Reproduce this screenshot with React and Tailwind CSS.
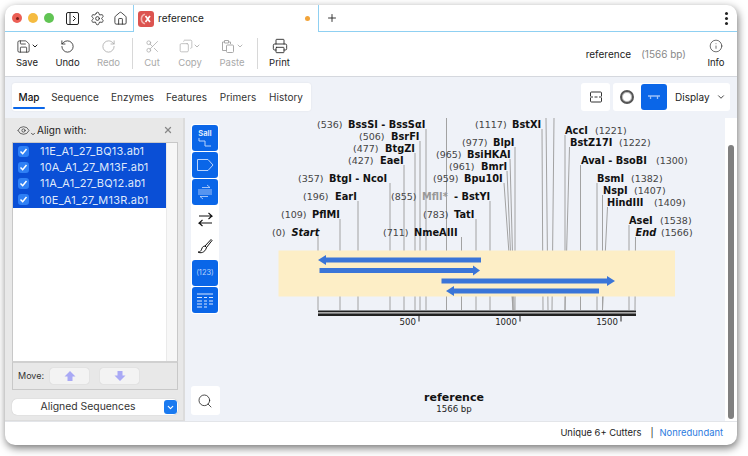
import { ChevronDown, Copy, Home, Info, Printer, RotateCcw, RotateCw, Save, Scissors, Search, Settings, X, Eye, Plus } from 'lucide-react';

const TOOLS = [
  { label: 'Undo', w: 'w-[41px]', Icon: RotateCcw },
  { label: 'Redo', w: 'w-[41px]', Icon: RotateCw, off: true },
];

const TABS = ['Map', 'Sequence', 'Enzymes', 'Features', 'Primers', 'History'];
const TAB_WIDTHS = ['w-[32px]', 'w-[60px]', 'w-[55px]', 'w-[53px]', 'w-[50px]', 'w-[46px]'];
const FILES = ['11E_A1_27_BQ13.ab1', '10A_A1_27_M13F.ab1', '11A_A1_27_BQ12.ab1', '10E_A1_27_M13R.ab1'];

// enzyme labels: [pos x, pos, name x, name, baseline y]
const LABELS = [
  [317, '(536)', 348, 'BssSI - BssSαI', 128],
  [359, '(506)', 391, 'BsrFI', 140],
  [353, '(477)', 385, 'BtgZI', 152],
  [348, '(427)', 380, 'EaeI', 164],
  [298, '(357)', 329, 'BtgI - NcoI', 182],
  [303, '(196)', 335, 'EarI', 200],
  [281, '(109)', 312, 'PflMI', 218],
  [383, '(711)', 414, 'NmeAIII', 236],
  [423, '(783)', 454, 'TatI', 218],
  [433, '(959)', 464, 'Bpu10I', 182],
  [449, '(961)', 481, 'BmrI', 170],
  [436, '(965)', 467, 'BsiHKAI', 158],
  [462, '(977)', 493, 'BlpI', 146],
  [475, '(1117)', 512, 'BstXI', 128],
  [595, '(1221)', 565, 'AccI', 134],
  [619, '(1222)', 570, 'BstZ17I', 146],
  [656, '(1300)', 581, 'AvaI - BsoBI', 164],
  [631, '(1382)', 597, 'BsmI', 182],
  [634, '(1407)', 603, 'NspI', 194],
  [654, '(1409)', 607, 'HindIII', 206],
  [660, '(1538)', 629, 'AseI', 224],
];

// cut lines: [top x, top y, bottom x]
const LINES = [
  [318, 236, 318], [340, 219, 340], [358, 201, 358], [390, 183, 390], [404, 165, 404],
  [415, 153, 415], [420, 141, 420], [426, 129, 426], [446.5, 118, 446.5], [461.5, 237, 461.5],
  [476, 219, 476], [490, 201, 490], [504, 183, 513], [507, 171, 513], [510, 159, 514],
  [515, 147, 515], [542, 129, 543], [546, 118, 548], [554, 118, 552], [565, 135, 565],
  [569.5, 147, 565], [580.5, 165, 580.5], [597, 183, 597], [602.5, 195, 602.5], [607.5, 207, 602.5],
  [629, 225, 629], [635.5, 237, 635],
];

function ToolButton({ label, w, off, children }) {
  return (
    <div className={`${w} flex flex-col items-center ${off ? 'text-[#a9a9a9]' : 'text-[#222]'}`}>
      <div className="h-[20px] flex items-center justify-center">{children}</div>
      <span className="text-[9.5px] leading-[14px]">{label}</span>
    </div>
  );
}

function Logo() {
  return (
    <div className="w-4 h-4 rounded-[3px] bg-[#dc5450] flex items-center justify-center">
      <svg viewBox="0 0 16 16" width="16" height="16">
        <path d="M7 3.2 A5 5 0 0 0 7 12.8" fill="none" stroke="#f3b5b0" strokeWidth="1.6" />
        <path d="M7.5 5 L12 11 M12 5 L7.5 11" stroke="white" strokeWidth="1.7" />
      </svg>
    </div>
  );
}

function BlueBtn({ children }) {
  return <div className="w-[26px] h-[26px] rounded-[3px] bg-[#0a66e8] flex items-center justify-center text-[#b9d3fb]">{children}</div>;
}

function PasteIcon() {
  return (
    <svg width="15" height="15" viewBox="0 0 15 15" fill="none" stroke="currentColor" strokeWidth="1">
      <path d="M3 3 H1.5 V11.5 H5 M8 3 H9.5 V5 M3.5 1.5 H7.5 V4 H3.5 Z" />
      <rect x="5.5" y="6" width="7" height="7.5" rx="1" />
    </svg>
  );
}

function BlockArrow({ down }) {
  return (
    <svg width="12" height="12" viewBox="0 0 12 12" fill="#a9a9f5" className={down ? 'rotate-180' : ''}>
      <path d="M6 1 L11.5 6.5 L8.5 6.5 L8.5 11 L3.5 11 L3.5 6.5 L0.5 6.5 Z" />
    </svg>
  );
}

function MapCanvas() {
  return (
    <svg viewBox="225 118 500 303" width="500" height="303" style={{ fontFamily: '"DejaVu Sans", sans-serif' }} className="block">
      {LINES.map(([x1, y1, x2], i) => (
        <line key={i} x1={x1} y1={y1} x2={x2} y2={310} stroke="#a2a2a2" strokeWidth="1" />
      ))}
      {LABELS.map(([px, pos, nx, name, y]) => (
        <g key={name}>
          <text x={px} y={y} fontSize="9.5" fill="#444">{pos}</text>
          <text x={nx} y={y} fontSize="9.8" fontWeight="700" fill="#111">{name}</text>
        </g>
      ))}
      <text x="272" y="236" fontSize="9.5" fill="#444">(0)</text>
      <text x="291.5" y="236" fontSize="9.8" fontWeight="700" fontStyle="italic" fill="#111">Start</text>
      <text x="635.5" y="236" fontSize="9.8" fontWeight="700" fontStyle="italic" fill="#111">End</text>
      <text x="661" y="236" fontSize="9.5" fill="#444">(1566)</text>
      <text x="391" y="200" fontSize="9.5" fill="#444">(855)</text>
      <text x="422" y="200" fontSize="9.8" fontWeight="700" fill="#999">MflI*</text>
      <text x="454" y="200" fontSize="9.8" fontWeight="700" fill="#111">- BstYI</text>

      <rect x="278.5" y="250.5" width="396.5" height="46" fill="#fdeec6" />
      <g fill="#3a75d8">
        <path d="M318 260 L326 255 L326 257.5 L481 257.5 L481 262.5 L326 262.5 L326 265 Z" />
        <path d="M480 270.5 L473 265.5 L473 268 L319.5 268 L319.5 273 L473 273 L473 275.5 Z" />
        <path d="M615 281 L607 276 L607 278.5 L441.5 278.5 L441.5 283.5 L607 283.5 L607 286 Z" />
        <path d="M446 291 L454 286 L454 288.5 L599 288.5 L599 293.5 L454 293.5 L454 296 Z" />
      </g>

      <rect x="318" y="310.5" width="318" height="1.5" fill="#222" />
      <rect x="318" y="312" width="318" height="1.5" fill="#aaa" />
      <rect x="318" y="313.5" width="318" height="2.5" fill="#222" />
      {[[419, '500'], [520, '1000'], [621, '1500']].map(([x, t]) => (
        <g key={t}>
          <line x1={x} y1="316" x2={x} y2="321.5" stroke="#222" />
          <text x={x - 3} y="324.5" fontSize="8.6" textAnchor="end" fill="#222">{t}</text>
        </g>
      ))}
      <text x="454" y="400.5" fontSize="11" fontWeight="700" textAnchor="middle" fill="#111">reference</text>
      <text x="454" y="412" fontSize="8.6" textAnchor="middle" fill="#222">1566 bp</text>
    </svg>
  );
}

export default function App() {
  return (
    <div className="w-[748px] h-[456px] bg-white pt-[5px] pl-[5px] overflow-hidden" style={{ fontFamily: 'Inter, sans-serif' }}>
      <div className="w-[732px] h-[440px] rounded-[10px] overflow-hidden bg-white flex flex-col shadow-[1px_3px_8px_rgba(0,0,0,0.55)]">
        {/* tab bar */}
        <div className="h-[27px] flex shrink-0">
          <div className="w-[129px] border-b border-r border-[#8fd0f2] flex items-center pl-[7px]">
            <span className="w-[10px] h-[10px] rounded-full bg-[#ec5f55] flex items-center justify-center"><span className="w-[3px] h-[3px] rounded-full bg-[#7c1f1a]" /></span>
            <span className="ml-[6px] w-[10px] h-[10px] rounded-full bg-[#f5bb40]" />
            <span className="ml-[6px] w-[10px] h-[10px] rounded-full bg-[#61c454]" />
            <svg className="ml-[12px]" width="13" height="13" viewBox="0 0 13 13" fill="none" stroke="#222" strokeWidth="1">
              <rect x="0.5" y="0.5" width="12" height="12" rx="1.5" />
              <path d="M4 0.5 V12.5 M7 4 L9.5 6.5 L7 9" />
            </svg>
            <Settings className="ml-[11px]" size={15} strokeWidth={1.3} color="#222" />
            <Home className="ml-[8px]" size={15} strokeWidth={1.3} color="#222" />
          </div>
          <div className="w-[184px] flex items-center pl-[4px] pr-[8px]">
            <Logo />
            <span className="ml-[4px] text-[10px] text-[#222] tracking-[0.05px]">reference</span>
            <span className="ml-auto w-[5px] h-[5px] rounded-full bg-[#f2a43a]" />
          </div>
          <div className="flex-1 border-l border-b border-[#8fd0f2] flex items-center pl-[7px] pr-[9px]">
            <Plus size={12} strokeWidth={1.8} color="#222" />
            <div className="ml-auto flex flex-col gap-[2px]">
              <span className="w-[3px] h-[3px] rounded-full bg-[#222]" />
              <span className="w-[3px] h-[3px] rounded-full bg-[#222]" />
              <span className="w-[3px] h-[3px] rounded-full bg-[#222]" />
            </div>
          </div>
        </div>

        {/* toolbar */}
        <div className="h-[45px] shrink-0 border-b border-[#d5d8de] flex items-start pt-[4px] pl-[2px]">
          <ToolButton label="Save" w="w-[40px]">
            <Save size={15} strokeWidth={1.2} />
            <ChevronDown size={8} strokeWidth={3} />
          </ToolButton>
          {TOOLS.map(({ label, w, Icon, off }) => (
            <ToolButton key={label} label={label} w={w} off={off}>
              <Icon size={15} strokeWidth={1.3} />
            </ToolButton>
          ))}
          <div className="w-px h-[31px] bg-[#d8d8d8] ml-[3px] mt-[2px]" />
          <ToolButton label="Cut" w="w-[38px]" off><Scissors size={15} strokeWidth={1.2} /></ToolButton>
          <ToolButton label="Copy" w="w-[38px]" off>
            <Copy size={14} strokeWidth={1.2} className="-scale-x-100" />
            <ChevronDown size={8} strokeWidth={2.5} />
          </ToolButton>
          <ToolButton label="Paste" w="w-[46px]" off>
            <PasteIcon />
            <ChevronDown size={8} strokeWidth={2.5} />
          </ToolButton>
          <div className="w-px h-[31px] bg-[#d8d8d8] ml-[2px] mt-[2px]" />
          <ToolButton label="Print" w="w-[43px]"><Printer size={16} strokeWidth={1.3} /></ToolButton>
          <div className="ml-auto self-center flex items-center pb-[3px] text-[10px]">
            <span className="text-[#222]">reference</span>
            <span className="ml-[10px] text-[#888]">(1566 bp)</span>
          </div>
          <div className="ml-[9px]">
            <ToolButton label="Info" w="w-[42px]"><Info size={14} strokeWidth={1.1} /></ToolButton>
          </div>
        </div>

        <div className="flex-1 min-h-0 bg-[#eff2f8] flex flex-col">
          {/* view tabs */}
          <div className="h-[41px] shrink-0 flex items-start pt-[6px] pl-[7px] pr-[7px]">
            <div className="h-[28px] w-[299px] bg-white rounded-[3px] flex items-center pl-[1px] text-[10px] text-[#333] shadow-[0_0_2px_rgba(0,0,0,0.08)]">
              {TABS.map((t, i) => (
                <div key={t} className={`h-full flex items-center justify-center relative ${TAB_WIDTHS[i]} ${i === 0 ? 'font-medium text-[#111]' : ''}`}>
                  {t}
                  {i === 0 && <span className="absolute left-0 right-0 bottom-[2px] h-[2px] bg-[#0a66e8] rounded-full" />}
                </div>
              ))}
            </div>
            <div className="ml-auto w-[29px] h-[28px] bg-white rounded-[3px] flex items-center justify-center">
              <svg width="12" height="12" viewBox="0 0 12 12" fill="none" stroke="#333" strokeWidth="1">
                <path d="M0.5 5 V2 Q0.5 1 1.5 1 H10.5 Q11.5 1 11.5 2 V5 M0.5 7 V10 Q0.5 11 1.5 11 H10.5 Q11.5 11 11.5 10 V7 M0 6 H3 M9 6 H12 M4.5 6 H7.5" />
              </svg>
            </div>
            <div className="ml-[3px] w-[117px] h-[28px] bg-white rounded-[3px] flex items-center pl-[7px] text-[10px] text-[#222]">
              <span className="w-[14px] h-[14px] rounded-full border-[2px] border-[#555] shadow-[inset_0_0_0_1px_#bbb]" />
              <div className="ml-[7px] w-[26px] h-[26px] bg-[#0a66e8] rounded-[3px] flex items-center justify-center">
                <svg width="12" height="5" viewBox="0 0 12 5" fill="none" stroke="#9cc0f8" strokeWidth="1.3">
                  <path d="M0 1 H12 M2.5 1 V4 M9.5 1 V4" />
                </svg>
              </div>
              <span className="ml-[8px]">Display</span>
              <ChevronDown className="ml-[6px]" size={10} strokeWidth={2} />
            </div>
          </div>

          <div className="flex-1 min-h-0 flex">
            {/* alignment panel */}
            <div className="w-[180px] shrink-0 bg-[#e8e8e8] border-r-2 border-[#dcdcdc] border-b flex flex-col px-[7px]">
              <div className="h-[24px] shrink-0 flex items-center text-[10px] text-[#222]">
                <Eye className="ml-[5px]" size={13} strokeWidth={1.2} />
                <ChevronDown size={6} strokeWidth={3} className="mt-[8px]" />
                <span className="ml-[1px]">Align with:</span>
                <X className="ml-auto mr-[3px]" size={10} strokeWidth={3} color="#888" />
              </div>
              <div className="h-[220px] w-[166px] shrink-0 border border-[#c8c8c8] flex flex-col">
                <div className="flex-1 min-h-0 flex bg-white">
                  <div className="w-[153px]">
                    {FILES.map((f) => (
                      <div key={f} className="h-[16.25px] bg-[#0a4fd6] flex items-center pl-[5px] text-[11px] text-[#dfe8fb] tracking-[0.2px]">
                        <span className="w-[11px] h-[11px] rounded-[3px] bg-[#2f80f5] flex items-center justify-center">
                          <svg width="9" height="9" viewBox="0 0 9 9" fill="none" stroke="white" strokeWidth="1.5"><path d="M1.5 4.5 L3.7 6.7 L7.5 2" /></svg>
                        </span>
                        <span className="ml-[11px]">{f}</span>
                      </div>
                    ))}
                  </div>
                  <div className="flex-1 bg-[#f7f7f7] border-l border-[#eaeaea]" />
                </div>
              </div>
              <div className="h-[29px] w-[166px] shrink-0 border border-t-[2px] border-[#c8c8c8] border-t-[#d0d0d0] flex items-center pl-[5px] text-[9px] text-[#333] -mt-px">
                <span>Move:</span>
                <div className="ml-[6px] w-[39px] h-[16px] rounded-[3px] bg-[#f3f3f3] flex items-center justify-center shadow-[0_0_1px_rgba(0,0,0,0.2)]">
                  <BlockArrow />
                </div>
                <div className="ml-[11px] w-[39px] h-[16px] rounded-[3px] bg-[#f3f3f3] flex items-center justify-center shadow-[0_0_1px_rgba(0,0,0,0.2)]">
                  <BlockArrow down />
                </div>
              </div>
              <div className="mt-[9px] h-[16px] w-[166px] shrink-0 bg-white rounded-[5px] flex items-center relative shadow-[0_0_1px_rgba(0,0,0,0.25)]">
                <span className="w-[152px] text-center text-[10.4px] text-[#333]">Aligned Sequences</span>
                <span className="absolute right-[1px] top-[1px] w-[13px] h-[14px] rounded-[3px] bg-[#1a7af0] flex items-center justify-center">
                  <ChevronDown size={9} strokeWidth={3} color="white" />
                </span>
              </div>
            </div>

            {/* side tools */}
            <div className="w-[40px] shrink-0 flex flex-col items-center pt-[6px] pb-[6px]">
              <div className="w-[28px] bg-white rounded-[3px] flex flex-col items-center py-px gap-px">
                <BlueBtn>
                  <div className="flex flex-col items-center">
                    <span className="text-[7.5px] font-bold leading-[8px] text-[#dce8fd]">SalI</span>
                    <svg width="14" height="9" viewBox="0 0 14 9" fill="none" stroke="#b9d3fb" strokeWidth="1"><path d="M1 0 V3 H7 V8 H13" /></svg>
                  </div>
                </BlueBtn>
                <BlueBtn>
                  <svg width="17" height="12" viewBox="0 0 17 12" fill="none" stroke="#b9d3fb" strokeWidth="1"><path d="M0.5 0.5 H11 L16 6 L11 11.5 H0.5 Z" /></svg>
                </BlueBtn>
                <BlueBtn>
                  <svg width="16" height="16" viewBox="0 0 16 16" fill="none" stroke="#c6dbfc" strokeWidth="0.8"><path d="M5 3.5 H13 L10 1 M1 6 H15 M1 8 H15 M1 10 H15 M11 12.5 H3 L6 15" /></svg>
                </BlueBtn>
                <div className="w-[26px] h-[26px] flex items-center justify-center">
                  <svg width="15" height="15" viewBox="0 0 15 15" fill="none" stroke="#111" strokeWidth="1.1"><path d="M1 4 H14 L10.5 1 M14 4 L10.5 7 M14 11 H1 L4.5 8 M1 11 L4.5 14" /></svg>
                </div>
                <div className="w-[26px] h-[26px] flex items-center justify-center">
                  <svg width="16" height="16" viewBox="0 0 16 16" fill="none" stroke="#111" strokeWidth="1"><path d="M8 8 L14 1.5 L15 2.5 L9.5 9.5 Z M8 8 C5 8 5 11 4 12.5 C3 14 2 14 1 14 C3 15.5 8 15 9.5 9.5 Z" /></svg>
                </div>
                <BlueBtn><span className="text-[7.5px]">(123)</span></BlueBtn>
                <BlueBtn>
                  <svg width="16" height="15" viewBox="0 0 16 15" fill="none" stroke="#dce8fd" strokeWidth="1.2"><path d="M0 1 H16 M0 4.5 H5 M7 4.5 H10 M12 4.5 H16 M0 8 H5 M7 8 H10 M12 8 H16 M0 11 H5 M7 11 H10 M12 11 H16 M0 14 H5 M7 14 H10" /></svg>
                </BlueBtn>
              </div>
              <div className="mt-auto w-[29px] h-[29px] bg-white rounded-[3px] flex items-center justify-center">
                <Search size={16} strokeWidth={1.2} color="#222" />
              </div>
            </div>

            <div className="flex-1 min-w-0">
              <MapCanvas />
            </div>

            <div className="w-[12px] shrink-0 bg-white pt-[27px] pb-[2px] pl-[3px] pr-[3px]">
              <div className="h-full bg-[#808080] rounded-full" />
            </div>
          </div>
        </div>

        {/* status bar */}
        <div className="h-[24px] shrink-0 border-t border-[#e3e5e9] flex items-center justify-end pr-[14px] text-[9.4px] text-[#222]">
          <span>Unique 6+ Cutters</span>
          <span className="ml-[9px]">|</span>
          <span className="ml-[6px] text-[#2b7be0]">Nonredundant</span>
        </div>
      </div>
    </div>
  );
}
